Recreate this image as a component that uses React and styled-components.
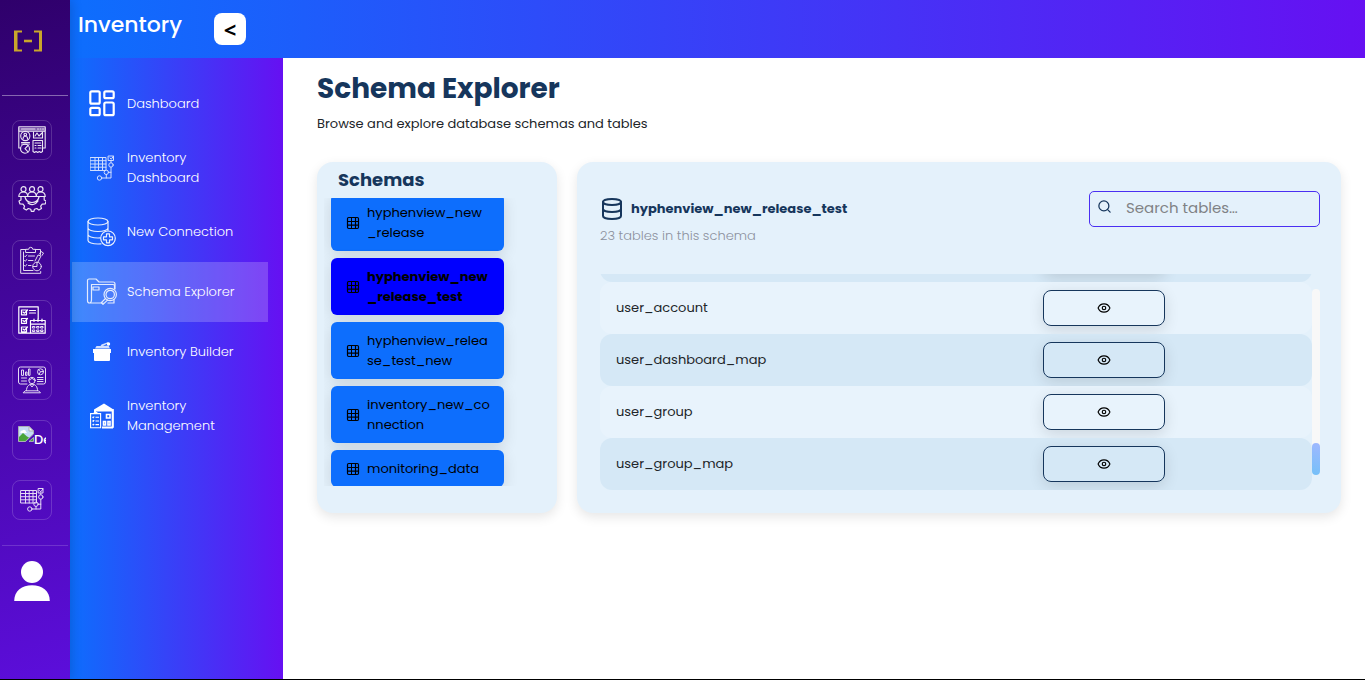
import React, { useLayoutEffect, useRef } from "react";
import styled, { createGlobalStyle, css } from "styled-components";
import { Database, Eye, Search } from "lucide-react";

const Global = createGlobalStyle`
  *, *::before, *::after { box-sizing: border-box; }
  body {
    margin: 0;
    background: #fff;
    color: #212529;
    font-family: Poppins, Inter, sans-serif;
    font-size: 13px;
    line-height: 20px;
  }
  h1, h2, p, ul { margin: 0; padding: 0; }
  button, input { font: inherit; color: inherit; }
`;

const Shell = styled.div`
  display: flex;
  min-height: 100vh;
  border-bottom: 1px solid #000;
`;

const Rail = styled.aside`
  position: relative;
  z-index: 1;
  flex: 0 0 70px;
  display: flex;
  flex-direction: column;
  padding: 0 2px;
  background: linear-gradient(165deg, #2f006b 0%, #5c0edb 100%);
  box-shadow: 2px 0 10px rgba(0, 0, 0, 0.15);
`;

const RailLogo = styled.a`
  display: flex;
  height: 95px;
  padding: 30px 0 0 11px;
`;

const RailList = styled.ul`
  display: flex;
  flex-direction: column;
  gap: 20px;
  padding: 24px 10px 25px;
  list-style: none;
  border-top: 1px solid rgba(255, 255, 255, 0.4);
  border-bottom: 1px solid rgba(255, 255, 255, 0.16);
`;

const RailButton = styled.button`
  display: flex;
  width: 40px;
  height: 40px;
  padding: 5px;
  background: transparent;
  border: 1px solid rgba(255, 255, 255, 0.17);
  border-radius: 8px;
  cursor: pointer;
`;

const MissingImage = styled.span`
  display: flex;
  width: 28px;
  height: 28px;
  overflow: hidden;
  color: #fff;
  font-weight: 500;
  line-height: 28px;
  svg { flex: none; }
`;

const Profile = styled.button`
  display: flex;
  margin: 14px 0 0 11px;
  padding: 0;
  width: 38px;
  background: none;
  border: 0;
  cursor: pointer;
`;

const Body = styled.div`
  flex: 1;
  min-width: 0;
  display: flex;
  flex-direction: column;
`;

const Header = styled.header`
  display: flex;
  align-items: flex-start;
  height: 58px;
  padding-left: 8px;
  background: linear-gradient(90deg, #0d6efd, #6610f2);
`;

const HeaderTitle = styled.div`
  width: 136px;
  padding-top: 8px;
  color: #fff;
  font-size: 22px;
  font-weight: 500;
  line-height: 34px;
`;

const Collapse = styled.button`
  width: 32px;
  height: 32px;
  margin-top: 13px;
  padding: 0;
  background: #fff;
  border: 0;
  border-radius: 8px;
  color: #000;
  font-family: "Open Sans", sans-serif;
  font-size: 22px;
  font-weight: 700;
  line-height: 32px;
  cursor: pointer;
`;

const Columns = styled.div`
  flex: 1;
  display: flex;
`;

const Sidebar = styled.nav`
  flex: 0 0 213px;
  padding: 16px 15px 0 2px;
  background: linear-gradient(90deg, #0d6efd, #6610f2);
`;

const NavLink = styled.a`
  display: flex;
  align-items: center;
  gap: 9px;
  min-height: 60px;
  padding: 14px 20px 14px 14px;
  color: #fff;
  font-weight: 300;
  text-decoration: none;
  background: ${(p) => (p.$active ? "rgba(255, 255, 255, 0.2)" : "none")};
  svg { flex: none; }
`;

const Main = styled.main`
  flex: 1;
  min-width: 0;
  padding: 11px 24px 24px 34px;
`;

const PageTitle = styled.h1`
  color: #16365c;
  font-size: 28px;
  font-weight: 700;
  line-height: 40px;
`;

const Lead = styled.p`
  margin: 5px 0 28px;
`;

const Panels = styled.div`
  display: flex;
  gap: 20px;
`;

const Panel = styled.section`
  background: #e4f1fb;
  border-radius: 16px;
  box-shadow: 0 4px 12px rgba(0, 0, 0, 0.1);
`;

const SchemaPanel = styled(Panel)`
  flex: 0 0 240px;
  padding: 6px 33px 27px 7px;
`;

const PanelTitle = styled.h2`
  padding-left: 14px;
  color: #16365c;
  font-size: 18px;
  font-weight: 700;
  line-height: 24px;
`;

const SchemaList = styled.ul`
  display: flex;
  flex-direction: column;
  gap: 7px;
  height: 288px;
  margin-top: 6px;
  padding: 0 20px 0 7px;
  overflow-y: auto;
  scrollbar-width: none;
  list-style: none;
`;

const SchemaButton = styled.button`
  display: flex;
  align-items: center;
  gap: 7px;
  width: 100%;
  padding: 9px 8px 8px 15px;
  background: #0d6efd;
  border: 0;
  border-radius: 6px;
  box-shadow: 0 4px 15px rgba(0, 0, 0, 0.12);
  color: #000;
  text-align: left;
  white-space: pre-line;
  cursor: pointer;
  svg { flex: none; }
  ${(p) =>
    p.$active &&
    css`
      background: #00f;
      font-weight: 700;
    `}
`;

const TablePanel = styled(Panel)`
  flex: 1;
  min-width: 0;
  padding: 29px 21px 23px 23px;
`;

const TableHead = styled.div`
  display: flex;
  justify-content: space-between;
  align-items: flex-start;
  height: 83px;
`;

const SchemaName = styled.h2`
  display: flex;
  align-items: center;
  gap: 7px;
  height: 36px;
  color: #16365c;
  font-size: 13px;
  font-weight: 700;
  line-height: 20px;
`;

const Count = styled.p`
  margin-top: -1px;
  color: #8d929e;
  font-weight: 300;
`;

const SearchBox = styled.label`
  display: flex;
  align-items: center;
  gap: 14px;
  width: 231px;
  height: 36px;
  padding: 0 7px;
  border: 1px solid #4a2ff2;
  border-radius: 5px;
  color: #16365c;
  svg { flex: none; margin-bottom: 5px; }
`;

const SearchInput = styled.input`
  flex: 1;
  min-width: 0;
  padding: 0 0 2px;
  background: none;
  border: 0;
  outline: 0;
  font-size: 15px;
  line-height: 22px;
  &::placeholder { color: #808285; opacity: 1; }
`;

const TableArea = styled.div`
  display: flex;
  height: 216px;
`;

const Scroller = styled.div`
  flex: 1;
  overflow-y: auto;
  scrollbar-width: none;
`;

const Table = styled.table`
  width: 100%;
  border-spacing: 0;
  table-layout: fixed;
`;

const Cell = styled.td`
  width: ${(p) => p.$width};
  padding: 0 16px;
  vertical-align: middle;
`;

const Row = styled.tr`
  height: 52px;
  ${Cell} { background: #e8f3fc; }
  &:nth-child(odd) ${Cell} { background: #d5e8f6; }
  ${Cell}:first-child { border-radius: 12px 0 0 12px; }
  ${Cell}:last-child { border-radius: 0 12px 12px 0; }
`;

const ViewButton = styled.button`
  display: flex;
  align-items: center;
  justify-content: center;
  width: 122px;
  height: 36px;
  background: transparent;
  border: 1px solid #16365c;
  border-radius: 8px;
  box-shadow: 0 4px 15px rgba(0, 0, 0, 0.12);
  color: #000;
  cursor: pointer;
`;

const ScrollTrack = styled.div`
  display: flex;
  align-items: flex-end;
  width: 8px;
  margin: 15px 0;
  background: #f8f8f8;
  border-radius: 8px;
`;

const ScrollThumb = styled.div`
  width: 8px;
  height: 32px;
  border-radius: 8px;
  background: linear-gradient(20deg, #74c0f8, #a0b8ff);
`;

const Line = ({ size = 28, width = 1.2, children, ...rest }) => (
  <svg
    width={size}
    height={size}
    viewBox={`0 0 ${size} ${size}`}
    fill="none"
    stroke="#fff"
    strokeWidth={width}
    strokeLinecap="round"
    strokeLinejoin="round"
    aria-hidden="true"
    {...rest}
  >
    {children}
  </svg>
);

const GridIcon = () => (
  <svg width="14" height="14" viewBox="0 0 14 14" fill="none" stroke="currentColor" strokeWidth="1.2" aria-hidden="true">
    <rect x="1.500" y="1.500" width="11" height="11" rx="1.200" />
    <path d="M1.500 5.500h11M1.500 9.200h11M9.500 1.500v11" />
    <path d="M5.500 1.500v11" strokeWidth="1" />
  </svg>
);

const ReportIcon = () => (
  <Line width={1.100} opacity=".9">
    <path d="M.8 22V.8h26.400V22M3.500 3H17M19.500 3h1M22 3h1M24.500 3h1M.8 5.300h26.400M.8 22h2M25 22h2" />
    <path d="M1 3.400h26" strokeWidth="4" opacity=".4" />
    <circle cx="7.300" cy="10" r="4.600" />
    <path d="M5 13c0-2 1-2.800 2.300-2.800S9.600 11 9.600 13M6 8.500a1.300 1.300 0 1 1 2.600 0 1.300 1.300 0 0 1-2.600 0M3.500 16.500h8M3.500 18h8" />
    <circle cx="7" cy="22.700" r="4.500" />
    <path d="m10 19.500-3 3.200 3 3.200M15.500 6v6h9V6M17 10l2-3 2 3 3-3M15 14.500h9.500v11l-1.600 1-1.600-1-1.600 1-1.600-1-1.600 1-1.500-1zM17 17h5.500M17 19.500h1M20 19.500h3M17 22h1M20 22h3" />
  </Line>
);

const TeamIcon = () => (
  <Line width={1.200} opacity=".9">
    <circle cx="5.500" cy="3.200" r="2.500" />
    <circle cx="14" cy="3.200" r="2.500" />
    <circle cx="22.500" cy="3.200" r="2.500" />
    <path d="M.8 10.500c0-3 2-4.500 4.700-4.500s4.200 1.500 4.200 4.500c0-3 1.800-4.500 4.300-4.500s4.300 1.500 4.300 4.500c0-3 1.700-4.500 4.200-4.500s4.700 1.500 4.700 4.500z" />
    <path d="M3 11v3l-2 1 1 3 3 .2 1.500 2-.8 2.300 2.600 1.600 2-1.600 2.500.8.500 2h2.600l.5-2 2.500-.8 2 1.600 2.600-1.600-.8-2.300 1.500-2 3-.2 1-3-2-1v-3" />
    <path d="M7 11a7.200 7.200 0 0 0 14 0M10 17c3 2.600 7.500 2 10-2" />
  </Line>
);

const AuditIcon = () => (
  <Line width={1} opacity=".85">
    <path d="M8 3.500H2.700v23.800h20V25.500M17 3.500h5.500v5M8 6.500h9.500V3.300h-2.800a2 2 0 0 0-4 0H8zM5.500 6v18.500H15" />
    <path d="m6.500 10 .8.8L8.700 9M10.500 10h6M6.500 14.500l.8.8 1.400-1.800M10.500 14.500h4.500M6.500 19.500l.8.8 1.400-1.800M10.500 19.500H13" />
    <circle cx="19" cy="20.500" r="4.300" />
    <path d="M19 16.200v4.300h-4M17 15l3-6 3 1-3 6M21.500 8l1.500-2.500 2.500 1.500-1.500 2.500" />
  </Line>
);

const ScheduleIcon = () => (
  <Line width={1.200}>
    <path d="M12 27.200H.8V.8h19.400v12M11.500 4.500h6M11.500 7h6M3.500 4h5v4.800h-5zM3.500 12.500h5v4.800h-5zM3.500 21h5v4.800h-5zM5 6l1.500 1.200L9.500 4M5 14.500l1.500 1.200 3-3.200M5 23l1.500 1.200 3-3.200" />
    <path d="M12.500 14.500h14.700v12.700H12.500zM12.500 18.200h14.700M16 13v2.500M20 13v2.500M24 13v2.500" />
    <path d="M14.800 20.500h2V22h-2zM19 20.500h2V22h-2zM23 20.500h2V22h-2zM14.800 24h2v1.500h-2zM19 24h2v1.500h-2zM23 24h2v1.500h-2z" strokeWidth=".9" />
  </Line>
);

const AnalystIcon = () => (
  <Line width={1} opacity=".85">
    <path d="M9 18H2.500a2 2 0 0 1-2-2V3a2 2 0 0 1 2-2h23a2 2 0 0 1 2 2v13a2 2 0 0 1-2 2H19" />
    <path d="M3.500 9V4h2v5zM7.500 9V6H9v3zM10.500 9V3H12v6zM3.500 12h5M3.500 15h5M19.500 11.500H25M19.500 13.500H25M19.500 15.500H25" />
    <circle cx="22.500" cy="5.800" r="3" />
    <path d="m20.500 3.700 2 2.100 3-.5M22.500 5.800l-1.500 2.500" />
    <circle cx="14" cy="14.500" r="3.200" />
    <path d="M11 14c1.500 0 2.500-.8 3-2 .5 1.200 1.500 2 3 2M8.500 24.500c0-4 2-6.200 5.500-6.200s5.500 2.200 5.500 6.200M5.500 26.800h17l-2-2H7.500zM12 18.500l2 2.500 2-2.500" />
  </Line>
);

const FlowIcon = () => (
  <Line width={1} opacity=".85">
    <path d="M3 4.500h15.500V17H3zM3 7.500h15.500M3 10.700h15.500M3 13.800h15.500M7.500 4.500V17M11.200 4.500V17M15 4.500V17M20.500 2.500H25V7h-4.500zM21.500 4.500l1.300 1.300L25 3M22.800 7v1.500" />
    <circle cx="22.800" cy="11" r="2.200" />
    <circle cx="18" cy="18.200" r="2.200" />
    <circle cx="11.800" cy="23" r="2.200" />
    <path d="M22.800 13.200V23H14M20.200 18.200h2.600M18 20.400V23" />
  </Line>
);

const BrokenImage = () => (
  <svg width="16" height="16" viewBox="0 0 16 16" aria-hidden="true">
    <path d="M.5.500h10.500l4.500 4.500v3L7.500 15.500h-7z" fill="#c5dcf5" stroke="#a9b0b5" />
    <path d="M1 15V11l4-4 4 3.500 2 1L7.500 15z" fill="#4aa53a" />
    <path d="M2.500 7a1.800 1.800 0 0 1 2-2.500A2 2 0 0 1 8 6c1 0 1 1 .5 1z" fill="#fff" />
    <path d="M11 .5V5h4.500z" fill="#f4f6f8" stroke="#a9b0b5" />
    <path d="m15.500 11.500-4.500 4h4.500z" fill="#4aa53a" stroke="#d6dde2" strokeWidth=".6" />
  </svg>
);

const Person = () => (
  <svg width="38" height="42" viewBox="0 0 38 42" fill="#fff" aria-hidden="true">
    <circle cx="19" cy="12" r="11" />
    <path d="M1.200 41C1.200 31 9 25.300 19 25.300S36.800 31 36.800 41z" />
  </svg>
);

const BracketLogo = () => (
  <svg width="30" height="22" viewBox="0 0 30 22" fill="none" stroke="#c9a62b" aria-hidden="true">
    <path d="M9 1.500H2v19h7M21 1.500h7v19h-7" strokeWidth="2" />
    <path d="M3 1v20M27.500 1v20" strokeWidth="3" />
    <path d="M11 11h8" strokeWidth="2.600" />
  </svg>
);

const DashboardIcon = () => (
  <Line size={32} width={2.200}>
    <rect x="4.300" y="3.300" width="9.400" height="12.400" rx="1.500" />
    <rect x="4.300" y="19.800" width="9.400" height="7.400" rx="1.500" />
    <rect x="18.300" y="3.300" width="9.400" height="6.900" rx="1.500" />
    <rect x="18.300" y="14.500" width="9.400" height="12.700" rx="1.500" />
  </Line>
);

const InventoryFlow = () => (
  <Line size={32} width={1} opacity=".8">
    <path d="M4.500 5.500H20V18.500H4.500zM4.500 8.700H20M4.500 12H20M4.500 15.200H20M9 5.500v13M12.500 5.500v13M16.500 5.500v13M22.500 4h5v4.500h-5zM24 6l1.300 1.200L27.500 4M25 8.500v2" />
    <circle cx="25" cy="13" r="2.200" />
    <circle cx="20.300" cy="20.300" r="2.200" />
    <circle cx="13.500" cy="26" r="2.200" />
    <path d="M25 15.200V26h-9.300M22.500 20.300H25M20.300 22.500V26" />
  </Line>
);

const ConnectionIcon = () => (
  <Line size={32} width={1.200} opacity=".9">
    <ellipse cx="12" cy="5.500" rx="10" ry="3.500" />
    <path d="M2 5.500v19c0 2 4.500 3.500 10 3.500l3-.2M22 5.500v8.700M2 12c0 2 4.500 3.500 10 3.500S22 14 22 12M2 18.500C2 20.500 6.500 22 12 22l2-.1" />
    <circle cx="22" cy="22.300" r="7.300" />
    <path d="M20.500 17.800h3v3h3v3h-3v3h-3v-3h-3v-3h3z" />
  </Line>
);

const ExplorerIcon = () => (
  <Line size={32} width={1.200} opacity=".85">
    <path d="M17 27H3.500C2 27 1.500 26 1.500 24.500V4.500c0-1 .5-1.500 1.500-1.500h7l3 3h14c1.500 0 2 .5 2 2v5M4 27c1-.5 1.500-1.500 1.500-3V8.500H27c1.200 0 1.500.6 1.500 1.500v3M7 11h6v3H7z" />
    <circle cx="24.200" cy="18.500" r="6.200" />
    <circle cx="24.200" cy="18.500" r="4.200" />
    <path d="m19.500 22.500-4.200 4.200 1.700 1.700 4.500-4.300M28 23.500V27h-6" />
  </Line>
);

const BuilderIcon = () => (
  <svg width="32" height="32" viewBox="0 0 32 32" fill="#fff" aria-hidden="true">
    <path d="M7 13h18v4H7z" />
    <path d="M8 17h16v7a1 1 0 0 1-1 1H9a1 1 0 0 1-1-1z" />
    <path d="M9 12.500 10.500 10h4l1-1.500 7-2.500-1 1.500-4.500 2.500 5.500-.5 1.500 3z" opacity=".8" />
    <circle cx="22.500" cy="8" r="1.700" />
  </svg>
);

const ManagementIcon = () => (
  <svg width="32" height="32" viewBox="0 0 32 32" fill="none" stroke="#fff" strokeWidth="1.100" aria-hidden="true">
    <path d="M8 12.500V9.500L18 3.500l9.500 6V28H26V11.500H10v1z" fill="#fff" stroke="none" />
    <path d="M26.700 9v18.500M16 27.500h11" strokeWidth="2" />
    <path d="M4.600 13.600h10v14.200h-10z" />
    <path d="M7.800 12.500h3.600M6.500 17l.7.700 1-1.200M9.500 17.200H13M6.500 20.700l.7.700 1-1.200M9.500 21H13M6.500 24.300l.7.700 1-1.200M9.500 24.600H13" />
    <path d="M20.500 14.500h3.500V18h-3.500zM17.500 21.500h2V25h-2zM22 21.500h2V25h-2z" strokeWidth="1.600" />
  </svg>
);

const railItems = [
  ["Reports", ReportIcon],
  ["Teams", TeamIcon],
  ["Audits", AuditIcon],
  ["Schedules", ScheduleIcon],
  ["Analysts", AnalystIcon],
  ["Details", null],
  ["Inventory", FlowIcon],
];

const navItems = [
  ["Dashboard", DashboardIcon],
  ["Inventory Dashboard", InventoryFlow],
  ["New Connection", ConnectionIcon],
  ["Schema Explorer", ExplorerIcon],
  ["Inventory Builder", BuilderIcon],
  ["Inventory Management", ManagementIcon],
];

const schemas = [
  "hyphenview_new\n_release",
  "hyphenview_new\n_release_test",
  "hyphenview_relea\nse_test_new",
  "inventory_new_co\nnnection",
  "monitoring_data",
];

const tables = ["", "user_account", "user_dashboard_map", "user_group", "user_group_map"];

export default function App() {
  const schemaList = useRef(null);
  const tableList = useRef(null);

  useLayoutEffect(() => {
    schemaList.current.scrollTop = 4;
    tableList.current.scrollTop = tableList.current.scrollHeight;
  }, []);

  return (
    <>
      <Global />
      <Shell>
        <Rail>
          <RailLogo href="#home" aria-label="Home">
            <BracketLogo />
          </RailLogo>
          <RailList>
            {railItems.map(([label, Icon]) => (
              <li key={label}>
                <RailButton aria-label={label}>
                  {Icon ? (
                    <Icon />
                  ) : (
                    <MissingImage>
                      <BrokenImage />
                      De
                    </MissingImage>
                  )}
                </RailButton>
              </li>
            ))}
          </RailList>
          <Profile aria-label="Profile">
            <Person />
          </Profile>
        </Rail>
        <Body>
          <Header>
            <HeaderTitle>Inventory</HeaderTitle>
            <Collapse aria-label="Collapse menu">&lt;</Collapse>
          </Header>
          <Columns>
            <Sidebar>
              {navItems.map(([label, Icon]) => (
                <NavLink key={label} href="#" $active={label === "Schema Explorer"}>
                  <Icon />
                  <span>{label}</span>
                </NavLink>
              ))}
            </Sidebar>
            <Main>
              <PageTitle>Schema Explorer</PageTitle>
              <Lead>Browse and explore database schemas and tables</Lead>
              <Panels>
                <SchemaPanel>
                  <PanelTitle>Schemas</PanelTitle>
                  <SchemaList ref={schemaList}>
                    {schemas.map((name, i) => (
                      <li key={name}>
                        <SchemaButton $active={i === 1}>
                          <GridIcon />
                          <span>{name}</span>
                        </SchemaButton>
                      </li>
                    ))}
                  </SchemaList>
                </SchemaPanel>
                <TablePanel>
                  <TableHead>
                    <div>
                      <SchemaName>
                        <Database size={24} />
                        hyphenview_new_release_test
                      </SchemaName>
                      <Count>23 tables in this schema</Count>
                    </div>
                    <SearchBox>
                      <Search size={15} />
                      <SearchInput type="text" placeholder="Search tables…" aria-label="Search tables" />
                    </SearchBox>
                  </TableHead>
                  <TableArea>
                    <Scroller ref={tableList}>
                      <Table>
                        <tbody>
                          {tables.map((name) => (
                            <Row key={name}>
                              <Cell $width="60%">{name}</Cell>
                              <Cell $width="40%">
                                <ViewButton aria-label={`View ${name}`}>
                                  <Eye size={14} />
                                </ViewButton>
                              </Cell>
                            </Row>
                          ))}
                        </tbody>
                      </Table>
                    </Scroller>
                    <ScrollTrack>
                      <ScrollThumb />
                    </ScrollTrack>
                  </TableArea>
                </TablePanel>
              </Panels>
            </Main>
          </Columns>
        </Body>
      </Shell>
    </>
  );
}
